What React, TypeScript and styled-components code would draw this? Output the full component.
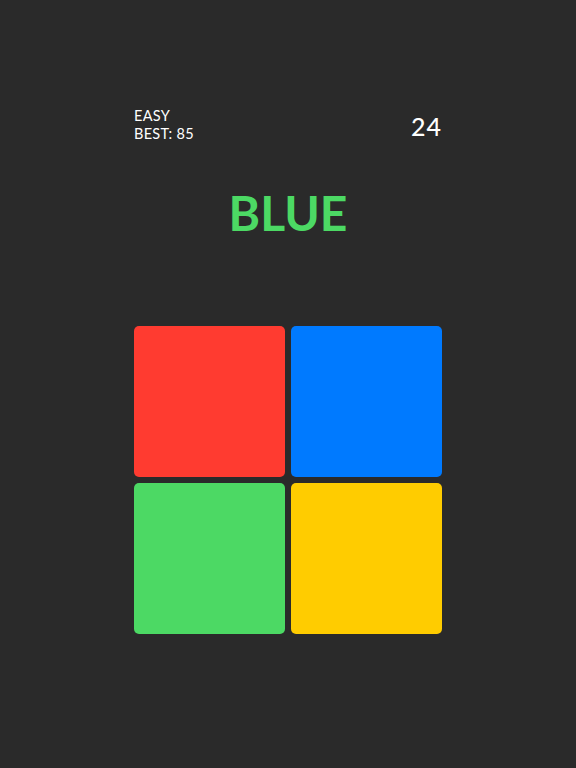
import React from "react";
import styled, { createGlobalStyle } from "styled-components";

const Global = createGlobalStyle`
  html, body { margin: 0; padding: 0; background: #2a2a2a; }
  body { font-family: "Lato", "Open Sans", sans-serif; }
`;

const Page = styled.div`
  width: 576px;
  height: 768px;
  background: #2a2a2a;
  display: flex;
  flex-direction: column;
  align-items: center;
`;

const Column = styled.div`
  width: 308px;
  display: flex;
  flex-direction: column;
  padding-top: 106px;
`;

const Header = styled.div`
  display: flex;
  justify-content: space-between;
  align-items: flex-start;
`;

const Info = styled.div`
  color: #ffffff;
  font-size: 14.5px;
  line-height: 18px;
  font-weight: 400;
  letter-spacing: 0.3px;
  padding-top: 1px;
`;

const Score = styled.div`
  color: #ffffff;
  font-size: 25px;
  font-weight: 500;
  line-height: 28px;
  margin-top: 6px;
  letter-spacing: 1px;
`;

const Word = styled.div<{ $color: string }>`
  color: ${(p) => p.$color};
  font-size: 48px;
  font-weight: 700;
  line-height: 60px;
  text-align: center;
  margin-top: 40px;
  letter-spacing: 0px;
`;

const Grid = styled.div`
  display: grid;
  grid-template-columns: 151px 151px;
  grid-auto-rows: 151px;
  gap: 6px;
  margin-top: 83px;
`;

const Tile = styled.div<{ $color: string }>`
  background: ${(p) => p.$color};
  border-radius: 5px;
`;

const tiles = ["#ff3b30", "#007aff", "#4cd964", "#ffcc00"];

export default function App() {
  return (
    <>
      <Global />
      <Page>
        <Column>
          <Header>
            <Info>
              <div>EASY</div>
              <div>BEST: 85</div>
            </Info>
            <Score>24</Score>
          </Header>
          <Word $color="#4cd964">BLUE</Word>
          <Grid>
            {tiles.map((c) => (
              <Tile key={c} $color={c} />
            ))}
          </Grid>
        </Column>
      </Page>
    </>
  );
}
